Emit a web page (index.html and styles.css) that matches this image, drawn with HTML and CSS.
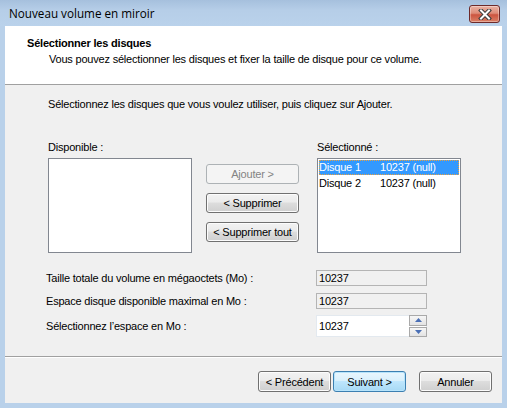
FILE: index.html
```html
<!DOCTYPE html>
<html lang="fr">
<head>
<meta charset="utf-8">
<title>Nouveau volume en miroir</title>
<link rel="stylesheet" href="styles.css">
</head>
<body>
<div class="window">
  <div class="titlebar">
    <span class="title">Nouveau volume en miroir</span>
    <button class="close" aria-label="Fermer">
      <svg width="18" height="11" viewBox="0 0 18 11">
        <path d="M5 1.5 L13 9.5 M13 1.5 L5 9.5" stroke="#3b3b3b" stroke-width="4" stroke-linecap="square"/>
        <path d="M5 1.5 L13 9.5 M13 1.5 L5 9.5" stroke="#ffffff" stroke-width="2" stroke-linecap="square"/>
      </svg>
    </button>
  </div>
  <div class="client">
    <div class="header">
      <div class="h-title">Sélectionner les disques</div>
      <div class="h-sub">Vous pouvez sélectionner les disques et fixer la taille de disque pour ce volume.</div>
    </div>
    <div class="content">
      <div class="intro">Sélectionnez les disques que vous voulez utiliser, puis cliquez sur Ajouter.</div>
      <div class="pickers">
        <div class="col">
          <div class="lbl">Disponible :</div>
          <div class="listbox"></div>
        </div>
        <div class="mid">
          <button class="btn disabled">Ajouter &gt;</button>
          <button class="btn">&lt; Supprimer</button>
          <button class="btn">&lt; Supprimer tout</button>
        </div>
        <div class="col">
          <div class="lbl">Sélectionné :</div>
          <div class="listbox">
            <div class="item sel"><span class="c1">Disque 1</span><span>10237 (null)</span></div>
            <div class="item"><span class="c1">Disque 2</span><span>10237 (null)</span></div>
          </div>
        </div>
      </div>
      <div class="fields">
        <div class="frow r1"><span class="flabel">Taille totale du volume en mégaoctets (Mo) :</span><div class="ro">10237</div></div>
        <div class="frow r2"><span class="flabel">Espace disque disponible maximal en Mo :</span><div class="ro">10237</div></div>
        <div class="frow r3"><span class="flabel">Sélectionnez l’espace en Mo :</span>
          <div class="spin">
            <span class="spin-val">10237</span>
            <div class="spin-btns">
              <span class="sb"><svg width="7" height="4" viewBox="0 0 7 4"><path d="M0 4 L3.5 0 L7 4Z" fill="#4a6fb5"/></svg></span>
              <span class="sb"><svg width="7" height="4" viewBox="0 0 7 4"><path d="M0 0 L3.5 4 L7 0Z" fill="#4a6fb5"/></svg></span>
            </div>
          </div>
        </div>
      </div>
    </div>
    <div class="footer">
      <button class="btn wbtn">&lt; Précédent</button>
      <button class="btn wbtn default">Suivant &gt;</button>
      <button class="btn wbtn cancel">Annuler</button>
    </div>
  </div>
</div>
</body>
</html>
```
FILE: styles.css
```css
* { box-sizing: border-box; }
html, body { margin: 0; padding: 0; }
body {
  width: 507px;
  height: 408px;
  overflow: hidden;
  font-family: "Liberation Sans", Arial, sans-serif;
  font-size: 11px;
  letter-spacing: -0.2px;
  color: #000;
}
.window {
  width: 507px;
  height: 408px;
  background: #b9d1ea;
  display: flex;
  flex-direction: column;
}
.titlebar {
  height: 26px;
  display: flex;
  align-items: flex-start;
  justify-content: space-between;
  background: linear-gradient(#a6c0dd, #b6cee8 40%, #bad2eb);
}
.title {
  font-family: "Open Sans", "Noto Sans", sans-serif;
  font-size: 11.7px;
  letter-spacing: 0;
  color: #000;
  margin: 5px 0 0 9px;
  line-height: 16px;
}
.close {
  margin: 5px 7px 0 0;
  width: 31px;
  height: 18px;
  padding: 0;
  border: 1px solid #6d2a2a;
  border-radius: 3px;
  background: linear-gradient(#eab2a4, #de8c78 45%, #cc5540 55%, #da8066);
  display: flex;
  align-items: center;
  justify-content: center;
  box-shadow: inset 0 0 0 1px rgba(255,255,255,0.35);
}
.client {
  margin: 0 5px 5px;
  flex: 1;
  background: #f0f0f0;
  display: flex;
  flex-direction: column;
}
.header {
  height: 59px;
  background: #fff;
  border-bottom: 1px solid #a0a0a0;
  padding: 10px 0 0 22px;
}
.h-title {
  font-weight: bold;
  line-height: 14px;
}
.h-sub {
  margin: 2px 0 0 22px;
  line-height: 14px;
}
.content {
  flex: 1;
  padding: 12px 0 0 43px;
}
.intro { line-height: 14px; }
.pickers {
  display: flex;
  margin-top: 29px;
}
.col { display: flex; flex-direction: column; width: 144px; }
.lbl { line-height: 14px; margin-bottom: 4px; }
.listbox {
  height: 95px;
  background: #fff;
  border: 1px solid #828790;
  padding: 1px;
}
.item {
  display: flex;
  height: 15px;
  line-height: 15px;
  padding-left: 0;
  margin-bottom: 1px;
}
.item .c1 { width: 61px; }
.item.sel {
  background: #3399ff;
  color: #fff;
  outline: 1px dotted #e8a040;
  outline-offset: -1px;
}
.mid {
  display: flex;
  flex-direction: column;
  gap: 9px;
  margin: 24px 18px 0 14px;
  width: 93px;
}
.btn {
  font-family: "Liberation Sans", Arial, sans-serif;
  font-size: 11px;
  letter-spacing: -0.2px;
  height: 20px;
  padding: 0;
  border: 1px solid #707070;
  border-radius: 3px;
  background: linear-gradient(#f2f2f2, #ebebeb 45%, #dddddd 50%, #cfcfcf);
  box-shadow: inset 0 0 0 1px #fcfcfc;
  color: #000;
}
.btn.disabled {
  border-color: #adb2b5;
  background: #f4f4f4;
  box-shadow: none;
  color: #838383;
}
.fields { margin: 17px 0 0 -2px; display: flex; flex-direction: column; }
.frow { display: flex; align-items: center; }
.flabel { width: 270px; line-height: 14px; }
.ro {
  width: 111px;
  height: 16px;
  border: 1px solid #b4b4b4;
  background: #f0f0f0;
  padding: 0 0 0 2px;
  line-height: 14px;
  color: #000;
}
.r2 { margin-top: 7px; }
.r3 { margin-top: 6px; }
.spin {
  width: 111px;
  height: 22px;
  background: #fff;
  display: flex;
  align-items: center;
  border: 1px solid #e3e9ef;
  padding-left: 2px;
}
.spin-val { flex: 1; line-height: 14px; }
.spin-btns {
  display: flex;
  flex-direction: column;
  gap: 1px;
  height: 22px;
  width: 18px;
  margin-right: -1px;
}
.sb {
  flex: 1;
  display: flex;
  align-items: center;
  justify-content: center;
  border: 1px solid #a9a9a9;
  background: linear-gradient(#f6f6f6, #e3e3e3);
}
.footer {
  height: 47px;
  border-top: 1px solid #a0a0a0;
  box-shadow: inset 0 1px 0 #ffffff;
  display: flex;
  padding: 14px 0 0 253px;
}
.wbtn { width: 73px; height: 21px; }
.default {
  margin-left: 2px;
  border-color: #3c7fb1;
  background: linear-gradient(#eaf6fd, #d9f0fc 45%, #bee6fd 50%, #a7d9f5);
  box-shadow: inset 0 0 0 1px #b7e4fb;
}
.cancel { margin-left: 13px; }
```
